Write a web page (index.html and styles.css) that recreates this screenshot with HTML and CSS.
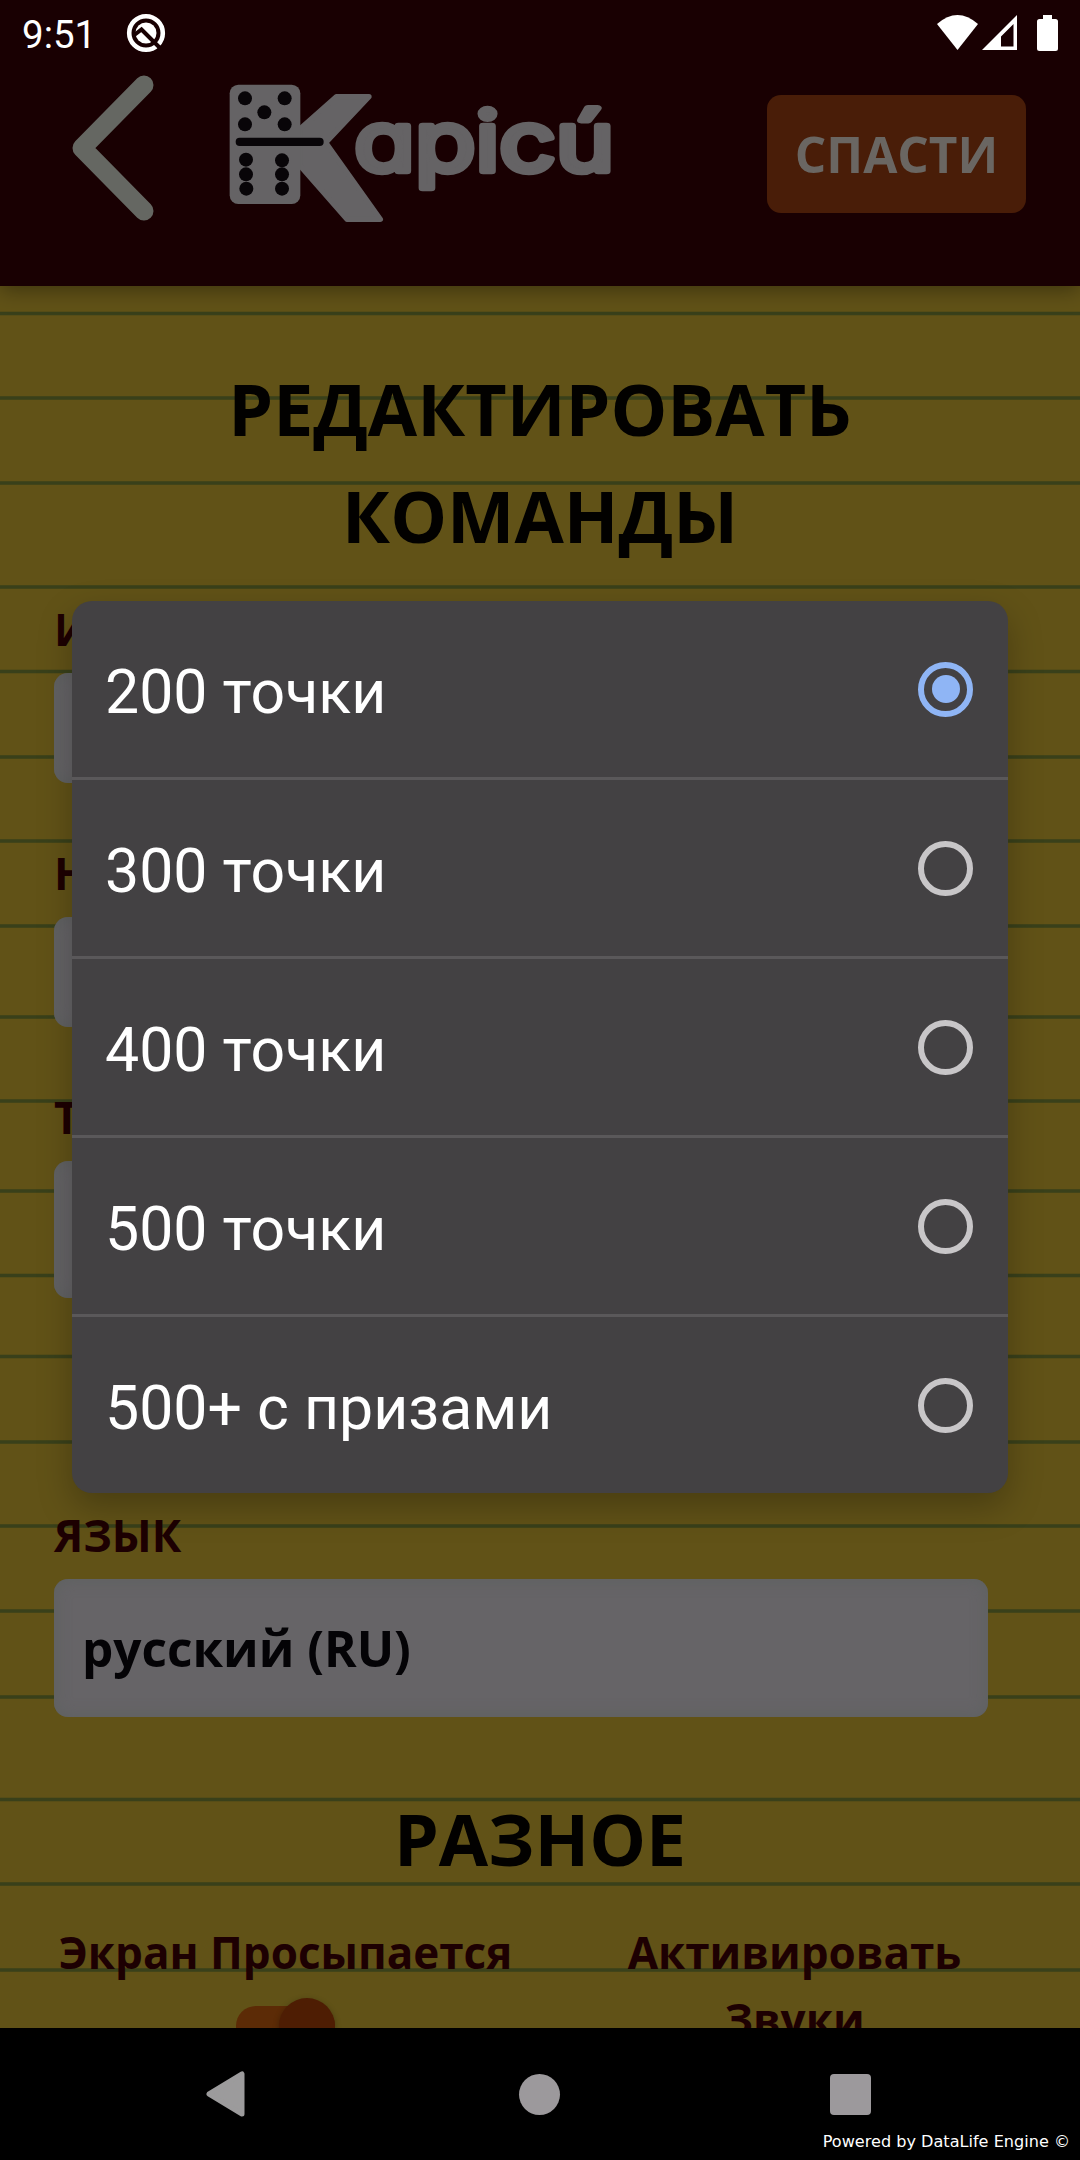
FILE: index.html
```html
<!DOCTYPE html>
<html lang="ru">
<head>
    <meta charset="UTF-8">
    <title>Kapicú</title>
    <link rel="stylesheet" href="styles.css">
</head>
<body>
    <div class="screen">
        <header class="header">
            <div class="status-bar">
                <span class="clock">9:51</span>
                <svg class="status-app" width="40" height="40" viewBox="0 0 40 40">
                    <circle cx="20" cy="20" r="16.8" fill="none" stroke="#fff" stroke-width="4.6"/>
                    <circle cx="20" cy="20" r="10.5" fill="#fff"/>
                    <path d="M7 23 L15.5 16.5 L34 35" fill="none" stroke="#180002" stroke-width="4"/>
                </svg>
                <span class="status-icons">
                    <svg width="41" height="35" viewBox="0 0 41 35"><path d="M0 9 Q20.500 -9 41 9 L20.500 35 Z" fill="#fff"/></svg>
                    <svg class="signal" width="35" height="35" viewBox="0 0 35 35"><path fill-rule="evenodd" d="M35 0 V35 H0 Z M31.500 9 L19 21.500 V31.500 H31.500 Z" fill="#fff"/></svg>
                    <svg width="21" height="36" viewBox="0 0 21 36"><path d="M6 0 H15 V4 H18.500 Q21 4 21 6.500 V33.500 Q21 36 18.500 36 H2.500 Q0 36 0 33.500 V6.500 Q0 4 2.500 4 H6 Z" fill="#fff"/></svg>
                </span>
            </div>
            <div class="toolbar">
                <svg class="back" width="82" height="146" viewBox="0 0 82 146">
                    <path d="M72 10 L10 73 L72 136" fill="none" stroke="#656762" stroke-width="19" stroke-linecap="round" stroke-linejoin="round"/>
                </svg>
                <svg class="logo" width="400" height="150" viewBox="80 60 1200 450">
                    <g fill="#656365" stroke="#656365" stroke-width="16" stroke-linejoin="round">
                        <path d="M298 208 L408 110 H506 L376 248 L540 478 H440 L298 316 Z"/>
                    </g>
                    <rect x="88" y="74" width="212" height="358" rx="26" fill="#656365"/>
                    <g fill="#080508">
                        <circle cx="134" cy="115" r="21"/><circle cx="253" cy="115" r="21"/>
                        <circle cx="192" cy="157" r="21"/>
                        <circle cx="134" cy="193" r="21"/><circle cx="253" cy="193" r="21"/>
                        <circle cx="137" cy="299" r="21"/><circle cx="245" cy="301" r="21"/>
                        <circle cx="137" cy="343" r="21"/><circle cx="245" cy="343" r="21"/>
                        <circle cx="138" cy="386" r="21"/><circle cx="245" cy="386" r="21"/>
                        <rect x="106" y="233" width="264" height="25" rx="12"/>
                    </g>
                    <text class="logo-text" x="462" y="334" textLength="780" lengthAdjust="spacingAndGlyphs">apicú</text>
                </svg>
                <button class="save">СПАСТИ</button>
            </div>
        </header>

        <main class="page">
            <svg class="paper" width="1080" height="1742" viewBox="0 286 1080 1742">
                <path d="M0 313.500H1080 M0 398H1080 M0 483H1080 M0 587H1080 M0 671.500H1080 M0 757H1080 M0 841H1080 M0 926H1080 M0 1017H1080 M0 1101H1080 M0 1191H1080 M0 1275.500H1080 M0 1356.500H1080 M0 1442H1080 M0 1526H1080 M0 1611H1080 M0 1697H1080 M0 1799.500H1080 M0 1884H1080 M0 1970H1080" stroke="#39401a" stroke-width="3.600"/>
            </svg>

            <form class="team-form">
                <h1>РЕДАКТИРОВАТЬ<br>КОМАНДЫ</h1>
                <label>И</label>
                <div class="field"></div>
                <label>Н</label>
                <div class="field"></div>
                <label>Т</label>
                <div class="field select goal"></div>
                <label>ЯЗЫК</label>
                <div class="field select">русский (RU)</div>
            </form>

            <h2>РАЗНОЕ</h2>
            <div class="options">
                <div class="option">
                    <span>Экран Просыпается</span>
                    <div class="switch"><div class="thumb"></div></div>
                </div>
                <div class="option">
                    <span>Активировать<br>Звуки</span>
                </div>
            </div>
        </main>

        <nav class="nav-bar">
            <svg width="39" height="46" viewBox="0 0 39 46"><path d="M3 23 L36 3 V43 Z" fill="#9c9b9c" stroke="#9c9b9c" stroke-width="5" stroke-linejoin="round"/></svg>
            <div class="nav-home"></div>
            <div class="nav-recent"></div>
            <span class="powered">Powered by DataLife Engine ©</span>
        </nav>

        <div class="dialog">
            <div class="choice">200 точки<span class="radio checked"></span></div>
            <div class="choice">300 точки<span class="radio"></span></div>
            <div class="choice">400 точки<span class="radio"></span></div>
            <div class="choice">500 точки<span class="radio"></span></div>
            <div class="choice">500+ с призами<span class="radio"></span></div>
        </div>
    </div>
</body>
</html>
```

FILE: styles.css
```css
* {
    box-sizing: border-box;
}

body {
    margin: 0;
    background: #000;
    font-family: "Open Sans", "Noto Sans", sans-serif;
}

.screen {
    position: relative;
    display: flex;
    flex-direction: column;
    width: 1080px;
    height: 2160px;
    overflow: hidden;
}

.header {
    position: relative;
    z-index: 1;
    height: 286px;
    background: #190002;
    box-shadow: 0 4px 20px rgba(0, 0, 0, 0.38);
}

.status-bar {
    display: flex;
    align-items: center;
    height: 68px;
    padding: 0 22px;
    color: #fff;
    font-family: Roboto, sans-serif;
    font-size: 38.5px;
}

.status-app {
    margin: 0 0 2px 30px;
}

.status-icons {
    display: flex;
    margin: 0 0 3px auto;
}

.signal {
    margin: 0 20px 0 4px;
}

.toolbar {
    display: flex;
    align-items: flex-start;
    padding: 7px 54px 0 72px;
}

.logo {
    margin: 5px 0 0 73px;
}

.logo-text {
    font-family: Inter, sans-serif;
    font-size: 248px;
    font-weight: 400;
    font-feature-settings: "cv11";
    fill: #656365;
    stroke: #656365;
    stroke-width: 20px;
    stroke-linejoin: round;
}

.save {
    width: 259px;
    height: 118px;
    margin: 20px 0 0 auto;
    padding: 0;
    border: none;
    border-radius: 14px;
    background: #491d08;
    color: #6a6662;
    font-family: inherit;
    font-size: 49.5px;
    font-weight: bold;
}

.page {
    position: relative;
    height: 1742px;
    overflow: hidden;
    background: #615217;
}

.paper {
    position: absolute;
    top: 0;
    left: 0;
}

.team-form {
    position: relative;
    padding: 69px 92px 0 54px;
}

h1,
h2 {
    position: relative;
    margin: 0;
    color: #020100;
    font-size: 71.5px;
    line-height: 107px;
    text-align: center;
}

h1 {
    margin: 0 -38px 27px 0;
}

label {
    display: block;
    margin-bottom: 10px;
    color: #1d0002;
    font-size: 44px;
    font-weight: bold;
    line-height: 67px;
}

.field {
    height: 110px;
    margin-bottom: 57px;
    padding: 0 28px;
    border-radius: 14px;
    background: #666467;
    box-shadow: inset 0 0 16px rgba(90, 96, 92, 0.7);
    color: #040306;
    font-size: 49.5px;
    font-weight: bold;
    line-height: 138px;
}

.select {
    height: 138px;
}

.goal {
    height: 137px;
    margin-bottom: 204px;
}

h2 {
    margin: 68px 0 27px;
}

.options {
    position: relative;
    display: grid;
    grid-template-columns: 1fr 1fr;
    padding: 0 31px;
    color: #1d0002;
    font-size: 44px;
    font-weight: bold;
    line-height: 67px;
    text-align: center;
}

.switch {
    display: flex;
    align-items: center;
    justify-content: flex-end;
    width: 99px;
    height: 40px;
    margin: 20px auto 0;
    border-radius: 20px;
    background: #5c2b06;
}

.thumb {
    flex: none;
    width: 56px;
    height: 56px;
    border-radius: 50%;
    background: #4e1d03;
    box-shadow: 0 2px 6px rgba(0, 0, 0, 0.3);
}

.nav-bar {
    position: relative;
    display: flex;
    align-items: center;
    justify-content: space-between;
    height: 132px;
    padding: 0 209px 0 206px;
    background: #000;
}

.nav-home,
.nav-recent {
    width: 41px;
    height: 41px;
    background: #9c999c;
}

.nav-home {
    margin-left: 3px;
    border-radius: 50%;
}

.nav-recent {
    border-radius: 4px;
}

.powered {
    position: absolute;
    right: 10px;
    bottom: 9px;
    color: #fff;
    font-family: "DejaVu Sans", sans-serif;
    font-size: 16.1px;
}

.dialog {
    position: absolute;
    top: 601px;
    left: 72px;
    z-index: 2;
    width: 936px;
    border-radius: 20px;
    background: #434143;
    box-shadow: 0 14px 34px rgba(0, 0, 0, 0.25);
}

.choice {
    display: flex;
    align-items: center;
    justify-content: space-between;
    height: 179px;
    padding: 6px 35px 0 33px;
    border-bottom: 3px solid #5a585a;
    color: #fff;
    font-family: Roboto, sans-serif;
    font-size: 60.8px;
}

.choice:last-child {
    height: 176px;
    border-bottom: none;
}

.radio {
    display: flex;
    align-items: center;
    justify-content: center;
    width: 55px;
    height: 55px;
    margin-bottom: 6px;
    border: 6px solid #c8c6c8;
    border-radius: 50%;
}

.checked {
    border-color: #8fb5f5;
}

.checked::after {
    content: "";
    width: 28px;
    height: 28px;
    border-radius: 50%;
    background: #8fb5f5;
}
```
